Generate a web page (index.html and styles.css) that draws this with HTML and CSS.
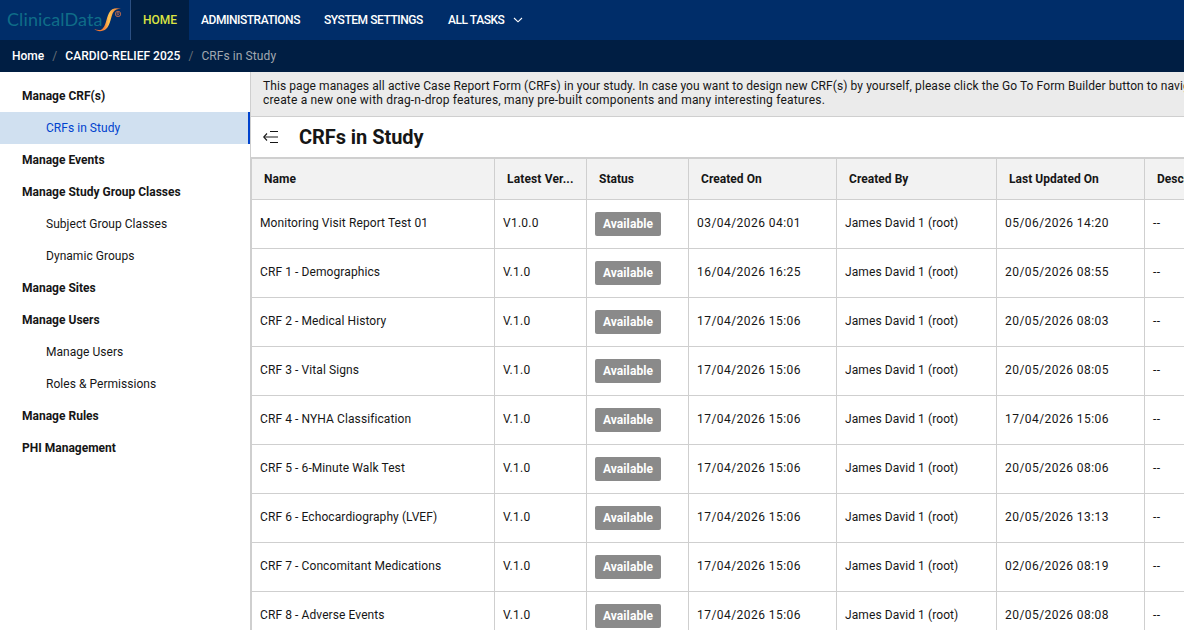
FILE: index.html
```html
<!DOCTYPE html>
<html lang="en">
<head>
<meta charset="utf-8">
<title>CRFs in Study</title>
<link rel="stylesheet" href="styles.css">
</head>
<body>
<header class="topbar">
  <a class="logo"><span class="logo-text">ClinicalData</span><svg class="logo-mark" width="28" height="25" viewBox="0 0 28 25"><defs><linearGradient id="swoosh" x1="0" y1="0" x2="1" y2="0"><stop offset="0" stop-color="#e9642c"/><stop offset=".4" stop-color="#f58a3a"/><stop offset=".55" stop-color="#ffc654"/><stop offset="1" stop-color="#e9642c"/></linearGradient></defs><path d="M27 1.800C22 .5 17.500 1 15 6C12 12 12 19 8 22.200C6 23.600 3 23.200 .3 22C3 24.900 9 24.800 12 22C17 17.500 16.500 9.500 19.500 5C21 2.600 23.500 1.800 27 1.800Z" fill="url(#swoosh)"/><circle cx="24" cy="7" r="2.700" fill="none" stroke="#b8684f" stroke-width=".9"/><path d="M23.100 8.700V5.500H24.300A.8.8 0 0 1 24.300 7.100H23.100M24.300 7.100L25.200 8.700" fill="none" stroke="#b8684f" stroke-width=".7"/></svg></a>
  <nav class="nav">
    <a class="nav-item active">HOME</a>
    <a class="nav-item admin">ADMINISTRATIONS</a>
    <a class="nav-item settings">SYSTEM SETTINGS</a>
    <a class="nav-item tasks">ALL TASKS<svg class="chevron" width="10" height="6" viewBox="0 0 10 6"><path d="M1 1L5 4.800L9 1" fill="none" stroke="#fff" stroke-width="1.100"/></svg></a>
  </nav>
</header>
<div class="crumbs"><a class="crumb">Home</a><span class="slash">/</span><a class="crumb study">CARDIO-RELIEF 2025</a><span class="slash">/</span><span class="current">CRFs in Study</span></div>
<div class="layout">
  <aside class="sidebar">
    <a class="group">Manage CRF(s)</a>
    <a class="link selected">CRFs in Study</a>
    <a class="group">Manage Events</a>
    <a class="group">Manage Study Group Classes</a>
    <a class="link">Subject Group Classes</a>
    <a class="link">Dynamic Groups</a>
    <a class="group">Manage Sites</a>
    <a class="group">Manage Users</a>
    <a class="link">Manage Users</a>
    <a class="link">Roles &amp; Permissions</a>
    <a class="group">Manage Rules</a>
    <a class="group">PHI Management</a>
  </aside>
  <main class="content">
    <div class="info"><div class="info-lead">This page manages all active Case Report Form (CRFs) in your study. In case you want to design new CRF(s) by yourself, please click the Go To Form Builder button to navigate</div><div>create a new one with drag-n-drop features, many pre-built components and many interesting features.</div></div>
    <div class="heading"><svg width="16" height="14" viewBox="0 0 16 14"><path d="M7 1.500H15M7 12.500H15M4 3.500L.7 7L4 10.500" fill="none" stroke="#161616" stroke-width="1.100"/><path d="M1 7H15" stroke="#161616"/></svg><h1>CRFs in Study</h1></div>
    <div class="table">
      <div class="row head"><div>Name</div><div class="latest">Latest Ver...</div><div>Status</div><div>Created On</div><div>Created By</div><div>Last Updated On</div><div>Description</div></div>
      <div class="row"><div>Monitoring Visit Report Test 01</div><div class="version">V1.0.0</div><div><span class="badge">Available</span></div><div class="date">03/04/2026 04:01</div><div>James David 1 (root)</div><div class="date">05/06/2026 14:20</div><div class="empty">--</div></div>
      <div class="row"><div>CRF 1 - Demographics</div><div class="version">V.1.0</div><div><span class="badge">Available</span></div><div class="date">16/04/2026 16:25</div><div>James David 1 (root)</div><div class="date">20/05/2026 08:55</div><div class="empty">--</div></div>
      <div class="row"><div>CRF 2 - Medical History</div><div class="version">V.1.0</div><div><span class="badge">Available</span></div><div class="date">17/04/2026 15:06</div><div>James David 1 (root)</div><div class="date">20/05/2026 08:03</div><div class="empty">--</div></div>
      <div class="row"><div>CRF 3 - Vital Signs</div><div class="version">V.1.0</div><div><span class="badge">Available</span></div><div class="date">17/04/2026 15:06</div><div>James David 1 (root)</div><div class="date">20/05/2026 08:05</div><div class="empty">--</div></div>
      <div class="row"><div>CRF 4 - NYHA Classification</div><div class="version">V.1.0</div><div><span class="badge">Available</span></div><div class="date">17/04/2026 15:06</div><div>James David 1 (root)</div><div class="date">17/04/2026 15:06</div><div class="empty">--</div></div>
      <div class="row"><div>CRF 5 - 6-Minute Walk Test</div><div class="version">V.1.0</div><div><span class="badge">Available</span></div><div class="date">17/04/2026 15:06</div><div>James David 1 (root)</div><div class="date">20/05/2026 08:06</div><div class="empty">--</div></div>
      <div class="row"><div>CRF 6 - Echocardiography (LVEF)</div><div class="version">V.1.0</div><div><span class="badge">Available</span></div><div class="date">17/04/2026 15:06</div><div>James David 1 (root)</div><div class="date">20/05/2026 13:13</div><div class="empty">--</div></div>
      <div class="row"><div>CRF 7 - Concomitant Medications</div><div class="version">V.1.0</div><div><span class="badge">Available</span></div><div class="date">17/04/2026 15:06</div><div>James David 1 (root)</div><div class="date">02/06/2026 08:19</div><div class="empty">--</div></div>
      <div class="row"><div>CRF 8 - Adverse Events</div><div class="version">V.1.0</div><div><span class="badge">Available</span></div><div class="date">17/04/2026 15:06</div><div>James David 1 (root)</div><div class="date">20/05/2026 08:08</div><div class="empty">--</div></div>
    </div>
  </main>
</div>
</body>
</html>
```
FILE: styles.css
```css
* { box-sizing: border-box; }
body { margin: 0; height: 630px; overflow: hidden; display: flex; flex-direction: column; background: #fff; color: #161616; font: 12px/14px Roboto, "Liberation Sans", sans-serif; letter-spacing: .09px; }
.topbar { flex: none; height: 40px; display: flex; background: #002d69; color: #fff; }
.logo { position: relative; width: 131px; flex: none; padding: 8px 0 0 7px; border-right: 1px solid #2b4f82; }
.logo-text { font: 18px/22px Lato, sans-serif; color: #0f6c88; letter-spacing: .1px; }
.logo-mark { position: absolute; left: 94px; top: 7px; }
.nav { display: flex; }
.nav-item { display: flex; align-items: center; padding: 0 12px; font-weight: 500; letter-spacing: -.45px; white-space: nowrap; }
.nav-item.active { background: #001e43; color: #dbe442; width: 58px; letter-spacing: 0; }
.admin { width: 123px; }
.settings { width: 124px; }
.chevron { margin-left: 9px; }
.crumbs { flex: none; height: 32px; display: flex; align-items: center; padding-left: 12px; background: #001e43; color: #fff; font-weight: 500; white-space: nowrap; letter-spacing: .02px; }
.slash { width: 21px; text-align: center; color: #697077; font-weight: 400; }
.current { color: #a2a9b0; font-weight: 400; letter-spacing: .08px; }
.layout { flex: 1; min-height: 0; display: flex; }
.sidebar { width: 250px; flex: none; padding-top: 8px; display: flex; flex-direction: column; }
.sidebar a { height: 32px; flex: none; display: flex; align-items: center; }
.group { padding-left: 22px; font-weight: 700; letter-spacing: .01px; }
.link { padding-left: 46px; letter-spacing: .04px; }
.link.selected { background: #d0e0f0; color: #0043ce; border-right: 2px solid #0043ce; }
.content { flex: 1; min-width: 0; overflow: hidden; border-left: 1px solid #cfcfcf; }
.info { height: 45px; padding: 7px 0 0 12px; background: #ebebeb; border-bottom: 1px solid #cfcfcf; white-space: nowrap; letter-spacing: .185px; }
.info-lead { letter-spacing: .085px; }
.heading { height: 40px; display: flex; align-items: center; padding-left: 12px; gap: 20px; }
h1 { margin: 0; font-size: 20px; line-height: 24px; font-weight: 700; letter-spacing: -.05px; }
.table { width: 1094px; border-top: 2px solid #cfcfcf; border-left: 1px solid #cfcfcf; }
.row { display: grid; grid-template-columns: 243px 92px 102px 148px 160px 148px 200px; height: 49px; }
.row > div { padding: 16px 8px 0; border-right: 1px solid #cfcfcf; border-bottom: 1px solid #cfcfcf; white-space: nowrap; }
.row.head { height: 41px; background: #f2f2f2; font-weight: 700; letter-spacing: .04px; }
.row.head > div { padding: 13px 12px 0; }
.row.head > .latest { letter-spacing: .15px; }
.row > div:has(.badge) { padding-top: 12px; }
.badge { display: block; width: 66px; height: 24px; line-height: 24px; border-radius: 2px; background: #8a8a8a; color: #fff; font-weight: 700; text-align: center; }
.row > .version { letter-spacing: .25px; }
.row > .date { letter-spacing: .45px; }
.row > .empty { letter-spacing: .4px; }
```
